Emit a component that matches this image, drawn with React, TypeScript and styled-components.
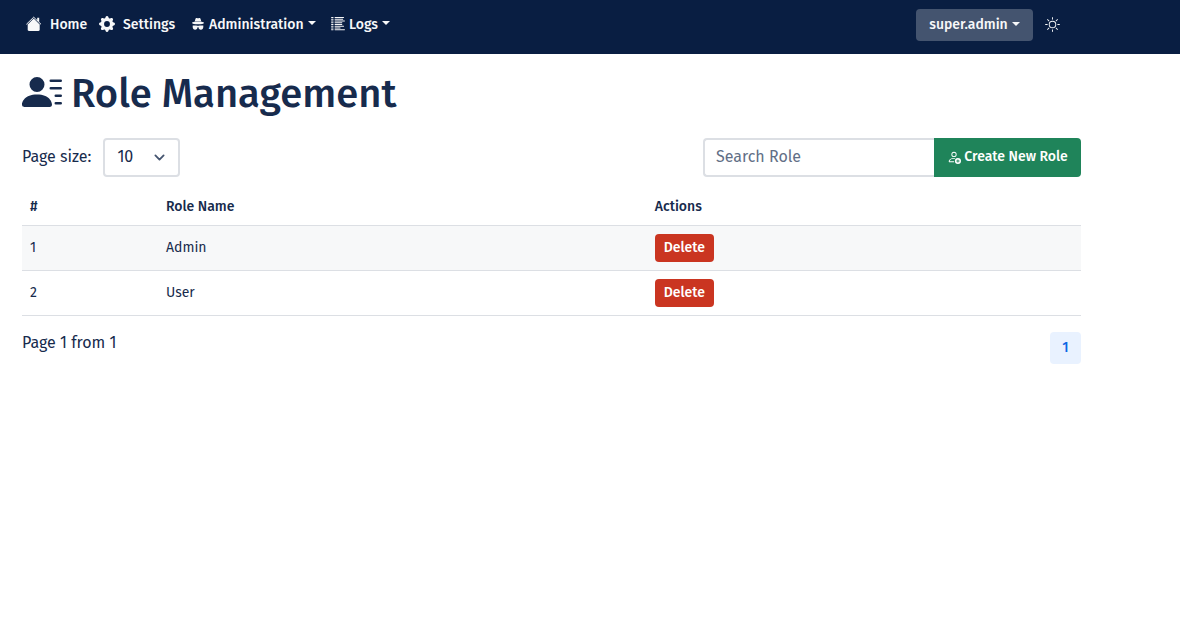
import React from 'react';
import styled, { createGlobalStyle } from 'styled-components';
import {
  BsGearFill,
  BsListColumnsReverse,
  BsPersonLinesFill,
  BsPersonAdd,
  BsSun,
} from 'react-icons/bs';

const GlobalStyle = createGlobalStyle`
  *, *::before, *::after { box-sizing: border-box; }
  body {
    margin: 0;
    background: #ffffff;
    color: #172b4d;
    font-family: "Fira Sans", "Noto Sans", sans-serif;
    font-size: 16px;
    line-height: 20px;
  }
  button, input, select { font-family: inherit; color: inherit; }
`;

const Navbar = styled.nav`
  display: flex;
  align-items: flex-start;
  justify-content: space-between;
  height: 54px;
  padding: 8px 120px 0 26px;
  background: #091e42;
  color: #f7f8f9;
`;

const NavList = styled.ul`
  display: flex;
  align-items: center;
  height: 32px;
  margin: 0;
  padding: 0;
  list-style: none;
`;

const NavItem = styled.li<{ $width: number }>`
  width: ${(p) => p.$width}px;
`;

const navControl = `
  display: flex;
  align-items: center;
  padding: 0;
  border: 0;
  background: none;
  color: #f7f8f9;
  font-size: 14px;
  font-weight: 500;
  line-height: 22px;
  white-space: nowrap;
  text-decoration: none;
  cursor: pointer;
`;

const NavLink = styled.a`
  ${navControl}
  gap: 8px;
`;

const NavToggle = styled.button`
  ${navControl}
  gap: 4px;
`;

const NavLabel = styled.span`
  padding-top: 1px;
`;

const Caret = styled.span`
  border-top: 4px solid currentColor;
  border-left: 4px solid transparent;
  border-right: 4px solid transparent;
  margin-bottom: 2px;
`;

const UserArea = styled.div`
  display: flex;
  align-items: center;
  gap: 12px;
`;

const UserButton = styled.button`
  ${navControl}
  justify-content: center;
  gap: 4px;
  width: 117px;
  height: 32px;
  margin-top: 1px;
  padding-bottom: 1px;
  border-radius: 4px;
  background: #44546f;
`;

const ThemeButton = styled.button`
  ${navControl}
`;

const Main = styled.main`
  padding: 16px 99px 0 22px;
`;

const Title = styled.h1`
  display: flex;
  align-items: center;
  gap: 9px;
  margin: 0 0 20px;
  font-size: 40px;
  font-weight: 500;
  line-height: 48px;
  white-space: nowrap;

  > svg { margin-bottom: 4px; }
`;

const Toolbar = styled.div`
  display: flex;
  justify-content: space-between;
  margin-bottom: 10px;
`;

const PageSize = styled.div`
  display: flex;
  align-items: center;
  gap: 12px;

  > label { padding-bottom: 2px; }
`;

const SelectBox = styled.div`
  display: grid;
  align-items: center;
  width: 77px;
  height: 39px;

  > * { grid-area: 1 / 1; }
  > svg { justify-self: end; margin-right: 15px; pointer-events: none; }
`;

const Select = styled.select`
  appearance: none;
  width: 100%;
  height: 100%;
  padding: 0 12px 2px;
  border: 2px solid #dcdfe4;
  border-radius: 4px;
  background: #ffffff;
  font-size: 16px;
`;

const SearchGroup = styled.div`
  display: flex;
  height: 39px;
`;

const SearchInput = styled.input`
  width: 231px;
  padding: 0 11px 2px;
  border: 2px solid #dcdfe4;
  border-right: 0;
  border-radius: 4px 0 0 4px;
  background: #ffffff;
  font-size: 16px;

  &::placeholder { color: #626f86; opacity: 1; }
`;

const CreateButton = styled.button`
  display: flex;
  align-items: center;
  justify-content: center;
  gap: 3px;
  width: 147px;
  padding: 0 0 2px;
  border: 0;
  border-radius: 0 4px 4px 0;
  background: #1f845a;
  color: #ffffff;
  font-size: 14px;
  font-weight: 500;
  white-space: nowrap;
`;

const Table = styled.table`
  width: 100%;
  margin-bottom: 16px;
  border-collapse: collapse;
  table-layout: fixed;
  font-size: 14px;
  line-height: 20px;
`;

const HeadCell = styled.th<{ $width?: string }>`
  width: ${(p) => p.$width ?? 'auto'};
  height: 38px;
  padding: 2px 8px 0;
  border-bottom: 1px solid #dcdfe4;
  font-weight: 500;
  text-align: left;
`;

const Row = styled.tr`
  &:nth-child(odd) { background: #f7f8f9; }
`;

const Cell = styled.td`
  height: 45px;
  padding: 0 8px;
  border-bottom: 1px solid #dcdfe4;
`;

const DeleteButton = styled.button`
  display: block;
  width: 59px;
  height: 28px;
  padding: 0;
  border: 0;
  border-radius: 4px;
  background: #ca3521;
  color: #ffffff;
  font-size: 14px;
  font-weight: 500;
`;

const Footer = styled.div`
  display: flex;
  justify-content: space-between;
  align-items: flex-start;
  line-height: 22px;
`;

const PageLink = styled.a`
  width: 31px;
  height: 32px;
  border-radius: 4px;
  background: #e9f2ff;
  color: #0c66e4;
  font-size: 14px;
  font-weight: 500;
  line-height: 32px;
  text-align: center;
  text-decoration: none;
`;

function HomeIcon() {
  return (
    <svg width="16" height="16" viewBox="0 0 16 16" fill="currentColor" aria-hidden="true">
      <path d="M11.2 1.8h2v4.4l-2-2z" />
      <path d="M.4 8.3 7.7 1.2 15 8.3" fill="none" stroke="currentColor" strokeWidth="1" />
      <path d="m7.7 2.6 6 5.800v5.400c0 .7-.5 1.200-1.200 1.200H2.900c-.7 0-1.200-.5-1.200-1.200V8.400z" />
    </svg>
  );
}

function SpyIcon() {
  return (
    <svg width="14" height="14" viewBox="0 0 14 14" fill="currentColor" aria-hidden="true">
      <path d="M3.700 4.600 4.500 1.700C4.700 1 5.200.8 5.800 1 6.600 1.300 7.400 1.300 8.200 1 8.800.8 9.300 1 9.500 1.700l.8 2.900z" />
      <path d="M3.500 4.700C2 5 1 5.400 1 5.900 1 6.700 3.700 7.200 7 7.200s6-.5 6-1.300c0-.5-1-.9-2.500-1.200z" />
      <path d="M1.700 8.400h3.500c.7 0 1.100.4 1.800.4s1.100-.4 1.800-.4h3.500v1.700c0 1.600-1 2.700-2.400 2.700-1.500 0-2.400-1.100-2.400-2.500-.3-.2-.7-.2-1 0 0 1.400-.9 2.500-2.400 2.500s-2.400-1.100-2.400-2.700z" />
    </svg>
  );
}

const roles = [
  { id: 1, name: 'Admin' },
  { id: 2, name: 'User' },
];

export default function App() {
  return (
    <>
      <GlobalStyle />
      <Navbar>
        <NavList>
          <NavItem $width={73}>
            <NavLink href="#home"><HomeIcon /><NavLabel>Home</NavLabel></NavLink>
          </NavItem>
          <NavItem $width={92}>
            <NavLink href="#settings"><BsGearFill size={16} /><NavLabel>Settings</NavLabel></NavLink>
          </NavItem>
          <NavItem $width={140}>
            <NavToggle type="button"><SpyIcon /><NavLabel>Administration</NavLabel><Caret /></NavToggle>
          </NavItem>
          <NavItem $width={60}>
            <NavToggle type="button"><BsListColumnsReverse size={14} /><NavLabel>Logs</NavLabel><Caret /></NavToggle>
          </NavItem>
        </NavList>
        <UserArea>
          <UserButton type="button">super.admin<Caret /></UserButton>
          <ThemeButton type="button" aria-label="Toggle theme"><BsSun size={15} /></ThemeButton>
        </UserArea>
      </Navbar>
      <Main>
        <Title><BsPersonLinesFill size={40} />Role Management</Title>
        <Toolbar>
          <PageSize>
            <label htmlFor="page-size">Page size:</label>
            <SelectBox>
              <Select id="page-size" defaultValue="10">
                <option value="10">10</option>
                <option value="25">25</option>
                <option value="50">50</option>
              </Select>
              <svg width="11" height="11" viewBox="0 0 16 16" fill="none" stroke="#44546f" strokeWidth="2.6" strokeLinecap="round" strokeLinejoin="round">
                <path d="m2 5 6 6 6-6" />
              </svg>
            </SelectBox>
          </PageSize>
          <SearchGroup>
            <SearchInput type="text" placeholder="Search Role" aria-label="Search Role" />
            <CreateButton type="button"><BsPersonAdd size={14} />Create New Role</CreateButton>
          </SearchGroup>
        </Toolbar>
        <Table>
          <thead>
            <tr>
              <HeadCell $width="136px">#</HeadCell>
              <HeadCell>Role Name</HeadCell>
              <HeadCell $width="41%">Actions</HeadCell>
            </tr>
          </thead>
          <tbody>
            {roles.map((role) => (
              <Row key={role.id}>
                <Cell>{role.id}</Cell>
                <Cell>{role.name}</Cell>
                <Cell><DeleteButton type="button">Delete</DeleteButton></Cell>
              </Row>
            ))}
          </tbody>
        </Table>
        <Footer>
          <span>Page 1 from 1</span>
          <PageLink href="#page-1" aria-current="page">1</PageLink>
        </Footer>
      </Main>
    </>
  );
}
